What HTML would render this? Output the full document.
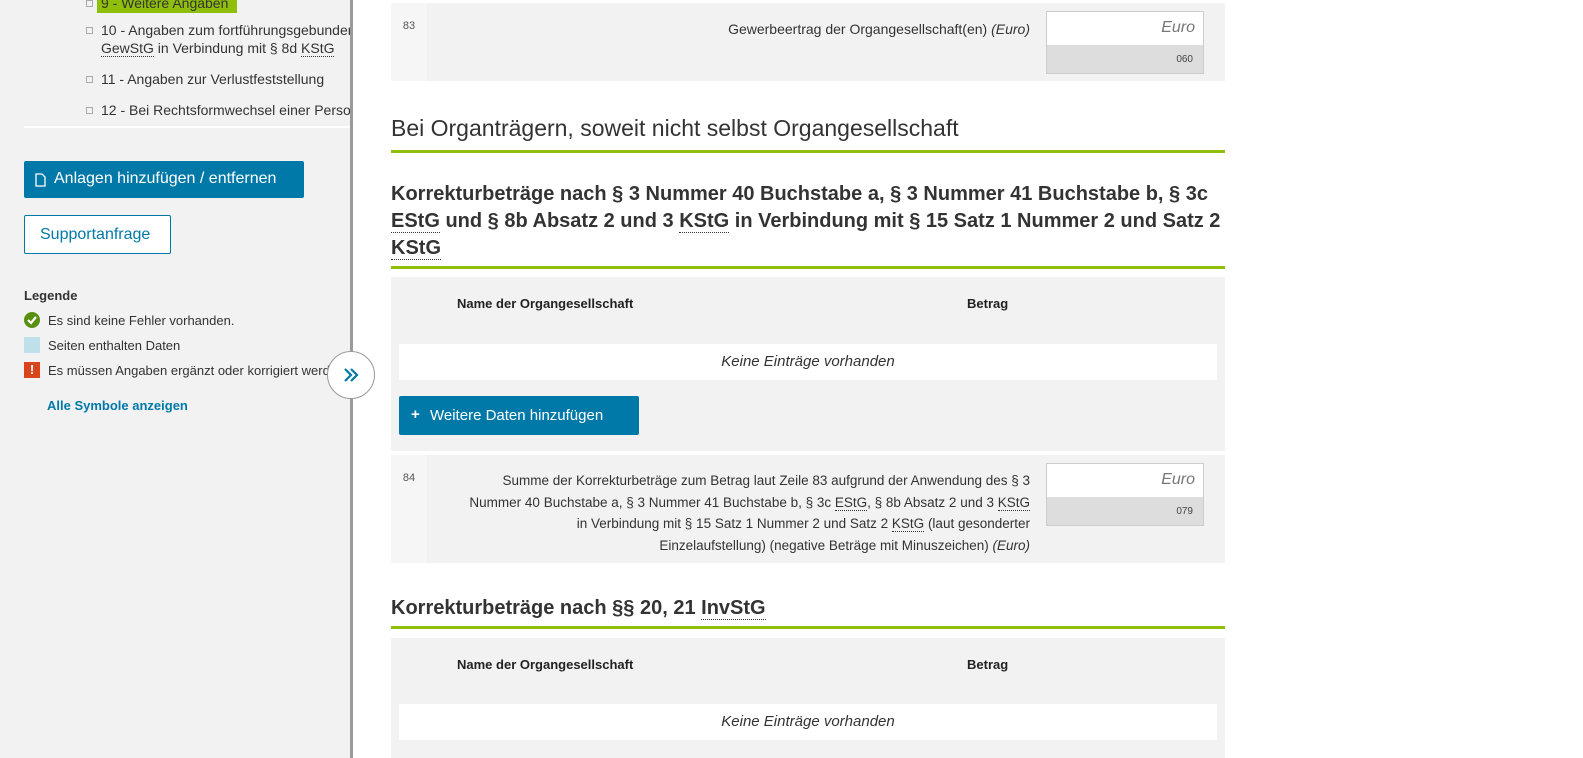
<!DOCTYPE html>
<html><head><meta charset="utf-8"><style>
*{box-sizing:border-box;margin:0;padding:0}
body{width:1583px;height:758px;overflow:hidden;background:#fff;font-family:"Liberation Sans",sans-serif;color:#333;position:relative}
.abbr{border-bottom:1px dotted #333}
#side{position:absolute;left:0;top:0;width:350px;height:758px;background:#f2f2f2;overflow:hidden}
#bar{position:absolute;left:350px;top:0;width:3px;height:758px;background:#9a9a9a}
.li{position:absolute;left:101px;font-size:14px;white-space:nowrap;color:#333;line-height:18px}
.li:before{content:"";position:absolute;left:-15px;top:6px;width:5px;height:5px;border:1px solid #aaa}
.btn{position:absolute;background:#0079a8;color:#fff;border-radius:2px;font-size:16px}
.abs{position:absolute}
.row{position:absolute;left:391px;width:834px;background:#f2f2f2}
.num{position:absolute;left:0;top:0;bottom:0;width:36px;background:#f6f6f6;font-size:11px;color:#555;text-align:center;padding-top:17px}
.inp{position:absolute;left:655px;width:158px;height:35px;border:1px solid #ccc;background:#fff;font-style:italic;font-size:16px;color:#777;text-align:right;padding:7px 8px}
.code{position:absolute;left:655px;width:158px;height:29px;border:1px solid #ccc;border-top:none;background:#ddd;font-size:10px;color:#444;text-align:right;padding:9px 10px}
.green{position:absolute;left:391px;width:834px;height:3px;background:#8fbf0a}
h2,h3{position:absolute;left:391px;font-weight:normal;color:#333;white-space:nowrap}
.th{position:absolute;font-size:13px;font-weight:bold;color:#222}
.empty{position:absolute;left:8px;width:818px;height:36px;background:#fff;text-align:center;font-style:italic;font-size:15px;padding-top:9px;color:#333}
</style></head><body>
<div id="side">
 <div class="abs" style="left:97px;top:-8px;width:140px;height:21px;background:#8fbf0a"></div>
 <div class="li" style="top:-6px;left:101px;color:#333">9 - Weitere Angaben</div>
 <div class="li" style="top:21px">10 - Angaben zum fortführungsgebundenen<br><span class="abbr">GewStG</span> in Verbindung mit § 8d <span class="abbr">KStG</span></div>
 <div class="li" style="top:70px">11 - Angaben zur Verlustfeststellung</div>
 <div class="li" style="top:101px">12 - Bei Rechtsformwechsel einer Personengesellschaft</div>
 <div class="abs" style="left:24px;top:126px;width:330px;height:2px;background:#fff"></div>
 <div class="btn" style="left:24px;top:161px;width:280px;height:37px;padding:9px 0 0 30px">Anlagen hinzufügen / entfernen
  <svg style="position:absolute;left:11px;top:12px" width="11" height="14" viewBox="0 0 11 14"><path d="M1 1h6l3 3v9H1z" fill="none" stroke="#fff" stroke-width="1.3"/></svg></div>
 <div class="abs" style="left:24px;top:215px;width:147px;height:39px;background:#fff;border:1px solid #0079a8;border-radius:2px;color:#0079a8;font-size:16px;padding:10px 0 0 15px">Supportanfrage</div>
 <div class="abs" style="left:24px;top:288px;font-size:13px;font-weight:bold">Legende</div>
 <div class="abs" style="left:24px;top:312px;width:16px;height:16px;border-radius:50%;background:#5a8f12"><svg width="16" height="16"><path d="M4 8l3 3 5-6" stroke="#fff" stroke-width="2.2" fill="none"/></svg></div>
 <div class="abs" style="left:48px;top:313px;font-size:13px">Es sind keine Fehler vorhanden.</div>
 <div class="abs" style="left:24px;top:337px;width:16px;height:16px;background:#bfe0ea"></div>
 <div class="abs" style="left:48px;top:338px;font-size:13px">Seiten enthalten Daten</div>
 <div class="abs" style="left:24px;top:362px;width:16px;height:16px;background:#d9441c;color:#fff;font-weight:bold;font-size:13px;text-align:center;line-height:16px">!</div>
 <div class="abs" style="left:48px;top:363px;font-size:13px;white-space:nowrap">Es müssen Angaben ergänzt oder korrigiert werden.</div>
 <div class="abs" style="left:47px;top:398px;font-size:13px;font-weight:bold;color:#0079a8">Alle Symbole anzeigen</div>
</div>
<div id="bar"></div>
<div class="abs" style="left:327px;top:351px;width:48px;height:48px;border-radius:50%;background:#fff;border:1px solid #999"></div>
<svg class="abs" style="left:343px;top:367px" width="16" height="16" viewBox="0 0 16 16"><path d="M2 2l6 6-6 6M8 2l6 6-6 6" fill="none" stroke="#0079a8" stroke-width="2.2"/></svg>

<div class="row" style="top:3px;height:78px">
 <div class="num">83</div>
 <div class="abs" style="right:195px;top:18px;font-size:14px">Gewerbeertrag der Organgesellschaft(en) <i>(Euro)</i></div>
 <div class="inp" style="top:8px">Euro</div>
 <div class="code" style="top:42px">060</div>
</div>
<h2 style="top:115px;font-size:23px">Bei Organträgern, soweit nicht selbst Organgesellschaft</h2>
<div class="green" style="top:150px"></div>
<h3 style="top:181px;font-size:20px;font-weight:bold;line-height:27px">Korrekturbeträge nach § 3 Nummer 40 Buchstabe a, § 3 Nummer 41 Buchstabe b, § 3c<br><span class="abbr">EStG</span> und § 8b Absatz 2 und 3 <span class="abbr">KStG</span> in Verbindung mit § 15 Satz 1 Nummer 2 und Satz 2<br><span class="abbr">KStG</span></h3>
<div class="green" style="top:266px"></div>
<div class="row" style="top:277px;height:174px">
 <div class="th" style="left:66px;top:19px">Name der Organgesellschaft</div>
 <div class="th" style="left:576px;top:19px">Betrag</div>
 <div class="empty" style="top:67px">Keine Einträge vorhanden</div>
 <div class="btn" style="left:8px;top:119px;width:240px;height:39px;padding:11px 0 0 31px;font-size:15px"><b style="position:absolute;left:12px;top:10px">+</b>Weitere Daten hinzufügen</div>
</div>
<div class="row" style="top:455px;height:108px">
 <div class="num">84</div>
 <div class="abs" style="right:195px;top:15px;width:700px;font-size:13.5px;text-align:right;line-height:21.5px;white-space:nowrap">Summe der Korrekturbeträge zum Betrag laut Zeile 83 aufgrund der Anwendung des § 3<br>Nummer 40 Buchstabe a, § 3 Nummer 41 Buchstabe b, § 3c <span class="abbr">EStG</span>, § 8b Absatz 2 und 3 <span class="abbr">KStG</span><br>in Verbindung mit § 15 Satz 1 Nummer 2 und Satz 2 <span class="abbr">KStG</span> (laut gesonderter<br>Einzelaufstellung) (negative Beträge mit Minuszeichen) <i>(Euro)</i></div>
 <div class="inp" style="top:8px">Euro</div>
 <div class="code" style="top:42px">079</div>
</div>
<h3 style="top:597px;font-size:20px;font-weight:bold">Korrekturbeträge nach §§ 20, 21 <span class="abbr">InvStG</span></h3>
<div class="green" style="top:626px"></div>
<div class="row" style="top:638px;height:120px">
 <div class="th" style="left:66px;top:19px">Name der Organgesellschaft</div>
 <div class="th" style="left:576px;top:19px">Betrag</div>
 <div class="empty" style="top:66px">Keine Einträge vorhanden</div>
</div>
</body></html>
